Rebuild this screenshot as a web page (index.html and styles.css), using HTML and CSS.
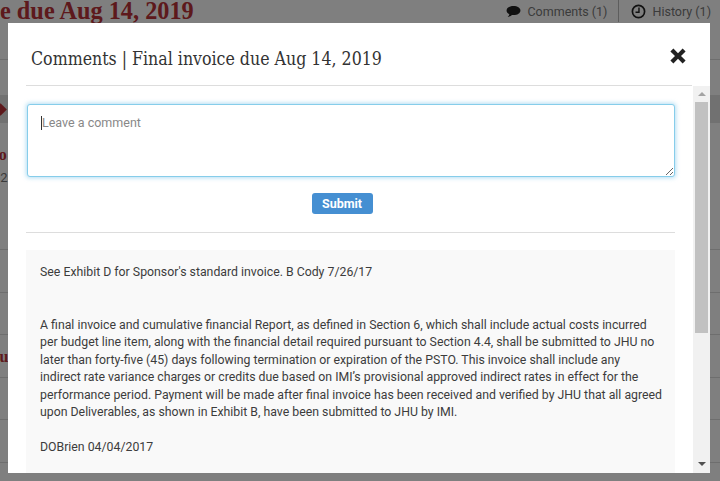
FILE: index.html
```html
<!DOCTYPE html>
<html lang="en">
<head>
    <meta charset="UTF-8">
    <meta name="viewport" content="width=device-width, initial-scale=1.0">
    <title>Comments</title>
    <link rel="stylesheet" href="styles.css">
</head>
<body>

    <!-- Page behind the dialog -->
    <div class="page">
        <div class="top-bar">
            <div class="page-title">e due Aug 14, 2019</div>
            <div class="tabs">
                <div class="tab">
                    <svg class="tab-icon" viewBox="0 0 16 14"><path d="M8 1C3.800 1 .6 3 .6 5.800c0 1.700 1.200 3.100 3 4-.2 1.100-.9 2.100-1.800 2.900 1.800-.2 3.400-.9 4.500-2 .5.1 1.100.1 1.700.1 4.200 0 7.400-2.200 7.400-5S12.200 1 8 1z"/></svg>
                    <span>Comments (1)</span>
                </div>
                <div class="tab tab-divided">
                    <svg class="tab-icon" viewBox="0 0 16 16"><circle cx="8" cy="8" r="6.500" fill="none" stroke-width="1.800"/><path d="M8.500 3.800v5H4.800" fill="none" stroke-width="1.500"/></svg>
                    <span>History (1)</span>
                </div>
            </div>
        </div>
        <div class="band"><span class="band-arrow"></span></div>
        <div class="summary">
            <div class="summary-name">Fo</div>
            <div class="summary-date">12</div>
        </div>
        <div class="row"></div>
        <div class="row"></div>
        <div class="row row-label"><span class="row-name">Du</span></div>
        <div class="row"></div>
        <div class="row"></div>
    </div>
    <div class="backdrop"></div>

    <!-- Comments dialog -->
    <div class="modal">
        <div class="modal-header">
            <h2 class="modal-title">Comments | Final invoice due Aug 14, 2019</h2>
            <svg class="close-icon" viewBox="0 0 16 16"><path d="M3.400.6 8 5.200 12.600.6 15.600 3.600 11 8l4.600 4.400-3 3L8 10.800 3.400 15.400.4 12.400 5 8 .4 3.600z"/></svg>
        </div>
        <div class="modal-body">
            <div class="modal-content">
                <div class="input-wrap">
                    <textarea class="comment-input" placeholder="Leave a comment"></textarea>
                    <span class="caret"></span>
                </div>
                <div class="submit-row"><button class="submit-btn">Submit</button></div>
                <hr class="divider">
                <div class="comment-box">
                    <p class="spaced">See Exhibit D for Sponsor's standard invoice. B Cody 7/26/17</p>
                    <p class="comment-para">A final invoice and cumulative financial Report, as defined in Section 6, which shall include actual costs incurred<br>per budget line item, along with the financial detail required pursuant to Section 4.4, shall be submitted to JHU no<br>later than forty-five (45) days following termination or expiration of the PSTO. This invoice shall include any<br>indirect rate variance charges or credits due based on IMI’s provisional approved indirect rates in effect for the<br>performance period. Payment will be made after final invoice has been received and verified by JHU that all agreed<br>upon Deliverables, as shown in Exhibit B, have been submitted to JHU by IMI.</p>
                    <p class="comment-para">DOBrien 04/04/2017</p>
                </div>
            </div>
            <div class="scrollbar">
                <div class="arrow-up"></div>
                <div class="thumb"></div>
                <div class="arrow-down"></div>
            </div>
        </div>
    </div>

</body>
</html>
```

FILE: styles.css
```css
/* Global Reset */
* {
    margin: 0;
    padding: 0;
    box-sizing: border-box;
}

html, body {
    height: 100%;
    overflow: hidden;
}

body {
    font-family: 'Roboto', sans-serif;
    background-color: #fff;
    color: #333;
}

/* Page behind the dialog */
.top-bar {
    display: flex;
    justify-content: space-between;
    align-items: flex-start;
    height: 60px;
    border-bottom: 1px solid #ddd;
}

.page-title {
    font-family: 'Liberation Serif', serif;
    font-size: 24.300px;
    font-weight: bold;
    color: #bb3338;
    line-height: 22px;
    white-space: nowrap;
}

.tabs {
    display: flex;
    font-size: 12.500px;
    color: #777;
    padding-right: 9px;
}

.tab {
    display: flex;
    align-items: center;
    gap: 6px;
    height: 22px;
}

.tab-divided {
    margin-left: 11px;
    padding-left: 12px;
    border-left: 1px solid #bbb;
}

.tab-icon {
    width: 15px;
    height: 15px;
    fill: #222;
    stroke: #222;
    stroke-width: 0;
}

.band {
    display: flex;
    align-items: center;
    height: 28px;
    margin-top: 35px;
    background: #e2e2e2;
}

.band-arrow {
    width: 9px;
    height: 9px;
    margin-left: -4px;
    background: #bb3338;
    transform: rotate(45deg);
}

.summary {
    height: 127px;
    padding-top: 23px;
    border-bottom: 1px solid #ddd;
}

.summary-name {
    margin-left: -11px;
    font-family: 'Liberation Serif', serif;
    font-size: 16px;
    font-weight: bold;
    color: #bb3338;
    line-height: 18px;
}

.summary-date {
    margin-left: -7px;
    margin-top: 6px;
    font-size: 13px;
    color: #777;
}

.row {
    height: 42.500px;
    border-bottom: 1px solid #ddd;
}

.row-label {
    padding-top: 13px;
}

.row-name {
    display: block;
    margin-left: -12px;
    font-family: 'Liberation Serif', serif;
    font-size: 16px;
    font-weight: bold;
    color: #bb3338;
}

.backdrop {
    position: fixed;
    inset: 0;
    background: rgba(0, 0, 0, 0.5);
}

/* Dialog */
.modal {
    position: fixed;
    left: 8px;
    top: 23px;
    width: 702px;
    height: 450px;
    background: #fff;
    display: flex;
    flex-direction: column;
}

.modal-header {
    display: flex;
    justify-content: space-between;
    align-items: center;
    height: 63px;
    margin-left: 18px;
    margin-right: 18px;
    padding: 9px 6px 0 5px;
    border-bottom: 1px solid #ddd;
}

.modal-title {
    font-family: 'DejaVu Serif Condensed', 'DejaVu Serif', serif;
    font-size: 17.600px;
    font-weight: normal;
    color: #333;
}

.close-icon {
    width: 16px;
    height: 16px;
    fill: #222;
    margin-top: -6px;
}

.modal-body {
    flex: 1;
    display: flex;
    min-height: 0;
    overflow: hidden;
}

.modal-content {
    width: 685px;
    padding: 18px 18px 0 18px;
}

.input-wrap {
    position: relative;
}

.comment-input {
    display: block;
    width: 648px;
    height: 73px;
    margin-left: 1px;
    padding: 10px 14px;
    font-family: 'Roboto', sans-serif;
    font-size: 12.500px;
    color: #333;
    border: 1px solid #86cdea;
    border-radius: 3px;
    outline: none;
    box-shadow: 0 0 4px 1px rgba(130, 200, 235, 0.6);
}

.comment-input::placeholder {
    color: #888;
}

/* Text cursor sitting in the focused box */
.caret {
    position: absolute;
    left: 15px;
    top: 12px;
    width: 1px;
    height: 14px;
    background: #333;
}

.submit-row {
    display: flex;
    justify-content: center;
    margin-top: 16px;
    margin-right: 17px;
}

.submit-btn {
    width: 61px;
    height: 21px;
    font-family: 'Roboto', sans-serif;
    font-size: 12.500px;
    font-weight: bold;
    color: #fff;
    background: #458fd2;
    border: none;
    border-radius: 3px;
}

.divider {
    border: none;
    border-top: 1px solid #ddd;
    margin-top: 18px;
    width: 649px;
}

.comment-box {
    width: 649px;
    margin-top: 17px;
    padding: 14px 14px;
    height: 240px;
    background: #f9f9f9;
    font-size: 12.300px;
    line-height: 17.500px;
    color: #3c3c3c;
    white-space: nowrap;
}

.spaced {
    margin-bottom: 35px;
}

.comment-para {
    margin-bottom: 17.500px;
}

.scrollbar {
    width: 17px;
    background: #f1f1f1;
    display: flex;
    flex-direction: column;
    align-items: center;
}

.arrow-up {
    width: 0;
    height: 0;
    margin: 6px 0 4px;
    border-left: 4px solid transparent;
    border-right: 4px solid transparent;
    border-bottom: 4px solid #a3a3a3;
}

.thumb {
    width: 13px;
    height: 231px;
    margin-top: 2px;
    background: #c1c1c1;
}

.arrow-down {
    width: 0;
    height: 0;
    margin-top: auto;
    margin-bottom: 7px;
    border-left: 4px solid transparent;
    border-right: 4px solid transparent;
    border-top: 4px solid #505050;
}
```
